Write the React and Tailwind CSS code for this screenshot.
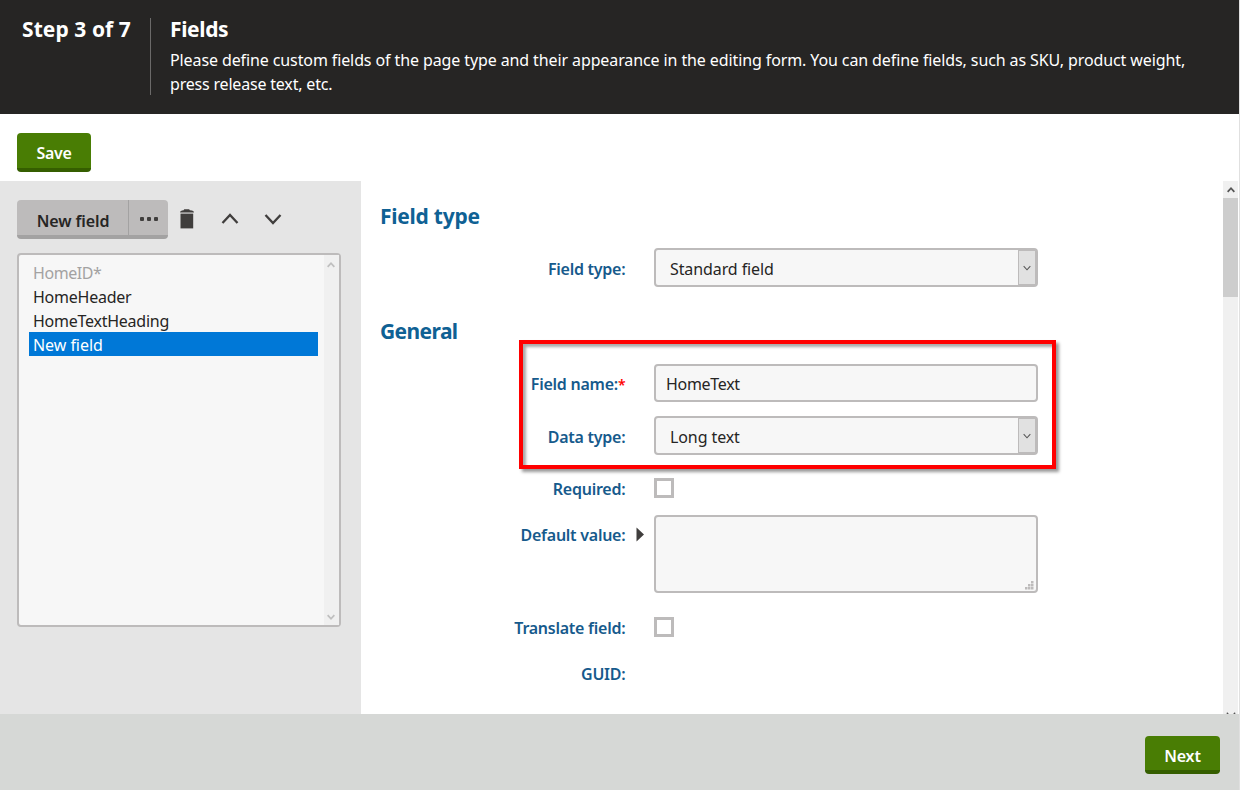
function ChevronUp({ className, strokeWidth = 2.3 }) {
  return (
    <svg className={className} viewBox="0 0 18 18" fill="none" stroke="currentColor" strokeWidth={strokeWidth}>
      <path d="M1.5 13 9 5l7.5 8" />
    </svg>
  );
}

function ChevronDown({ className, strokeWidth = 2.3 }) {
  return (
    <svg className={className} viewBox="0 0 18 18" fill="none" stroke="currentColor" strokeWidth={strokeWidth}>
      <path d="M1.5 5 9 13l7.5-8" />
    </svg>
  );
}

function TrashIcon() {
  return (
    <svg className="h-5 w-4" viewBox="0 0 16 20" fill="#403e3d">
      <path d="M1 3.6Q1 2 3 1.6L4.6 1.3 5.2 0.2H10.2L10.8 1.3 13 1.6Q15 2 15 3.6Z" />
      <path d="M1.5 4.6H14.2V19.4H1.5Z" />
    </svg>
  );
}

function GreenButton({ children, className }) {
  return (
    <button
      className={`flex justify-center rounded-[4px] border-b-4 border-[#355e00] bg-[#497d04] font-semibold text-white ${className}`}
    >
      {children}
    </button>
  );
}

function Row({ label, required, className, children, labelClass = "pt-2" }) {
  return (
    <div className={`flex items-start ${className}`}>
      <div className={`w-[246px] shrink-0 pr-[0.6px] text-right leading-6 font-semibold tracking-[-0.25px] whitespace-nowrap text-[#165a8c] ${labelClass}`}>
        {label}
        {required && <span className="text-sm text-[#f00]">*</span>}
      </div>
      {children}
    </div>
  );
}

function Select({ value }) {
  return (
    <div className="ml-7 flex h-[39px] w-[384px] items-center rounded-[4px] border-2 border-[#bdbbbb] bg-[#f7f7f7] pl-[14px] text-[#262524]">
      <span className="grow pt-0.5 leading-6 tracking-[-0.1px]">{value}</span>
      <span className="flex h-[35px] w-[18px] items-center justify-center border border-[#bdbbbb] bg-[#e1e1e1] text-[#555]">
        <ChevronDown className="h-2 w-2" />
      </span>
    </div>
  );
}

function Checkbox() {
  return <span className="ml-7 size-5 border-[3px] border-[#bdbbbb] bg-white" />;
}

const fields = ["HomeHeader", "HomeTextHeading"];
const gripDots = [[6, 0], [3, 3], [6, 3], [0, 6], [3, 6], [6, 6]];

export default function App() {
  return (
    <div className="flex h-[790px] w-[1240px] flex-col overflow-hidden border-r border-[#e0e0e0] bg-white font-['Noto_Sans','Open_Sans',sans-serif] text-base text-[#262524]">
      <header className="flex h-[114px] shrink-0 bg-[#262524] pt-[18px] text-white">
        <h1 className="h-[77px] w-[151px] border-r border-[#6b6a69] pl-[22px] text-[21px] leading-[22px] font-bold tracking-[0.07px] whitespace-nowrap">
          Step 3 of 7
        </h1>
        <div className="pl-[19px]">
          <h2 className="text-[21px] leading-[22px] font-bold tracking-[-0.35px]">Fields</h2>
          <p className="mt-2 leading-6 tracking-[-0.107px] whitespace-nowrap">
            Please define custom fields of the page type and their appearance in the editing form. You can define fields, such as SKU, product weight,
            <br />
            <span className="tracking-[-0.19px]">press release text, etc.</span>
          </p>
        </div>
      </header>

      <div className="h-[67px] shrink-0 pt-[19px] pl-[17px]">
        <GreenButton className="h-[39px] w-[74px] pt-2 leading-6 tracking-[-0.3px]">Save</GreenButton>
      </div>

      <div className="flex h-[533px] shrink-0">
        <aside className="w-[361px] shrink-0 bg-[#e5e5e5] pt-[19px] pl-[17px]">
          <div className="flex h-[39px] items-start text-[#403e3d]">
            <div className="flex h-[39px] w-[151px] overflow-hidden rounded-[4px] border-b-4 border-[#a3a2a2] bg-[#bdbbbb]">
              <button className="w-28 border-r border-[#a3a2a2] pt-[7px] pl-px leading-6 font-semibold tracking-[-0.1px] text-[#262524]">
                New field
              </button>
              <button className="flex grow items-center justify-center gap-[3px] pt-[3px]">
                <span className="size-1 rounded-[1px] bg-current" />
                <span className="size-1 rounded-[1px] bg-current" />
                <span className="size-1 rounded-[1px] bg-current" />
              </button>
            </div>
            <span className="mt-[9px] ml-[11px]"><TrashIcon /></span>
            <ChevronUp className="mt-2.5 ml-[26px] size-[18px]" />
            <ChevronDown className="mt-2.5 ml-[25px] size-[18px]" />
          </div>
          <div className="mt-3.5 flex h-[374px] w-[324px] rounded-[4px] border-2 border-[#bdbbbb] bg-[#f7f7f7]">
            <ul className="grow pt-[5px] pr-[6px] pl-2.5 leading-6 tracking-[-0.25px]">
              <li className="h-6 pt-px pl-1 tracking-[-0.45px] text-[#a3a2a2]">HomeID*</li>
              {fields.map((name) => (
                <li key={name} className="h-6 pt-px pl-1">{name}</li>
              ))}
              <li className="h-6 bg-[#0078d7] pt-px pl-1 tracking-[-0.05px] text-white">New field</li>
            </ul>
            <div className="flex w-[15px] flex-col items-center justify-between bg-[#f0f0f0] pt-1.5 pr-px pb-1 text-[#bfbfbf]">
              <ChevronUp className="h-2 w-2" strokeWidth={4} />
              <ChevronDown className="h-2 w-2" strokeWidth={4} />
            </div>
          </div>
        </aside>

        <main className="grow pt-[23px] pl-[19px]">
          <h3 className="h-6 text-[21px] leading-6 font-bold tracking-[-0.25px] text-[#0f6194]">Field type</h3>
          <Row label="Field type:" labelClass="pt-[9px]" className="mt-5 h-[39px]">
            <Select value="Standard field" />
          </Row>
          <h3 className="mt-8 h-6 text-[21px] leading-6 font-bold tracking-[-0.6px] text-[#0f6194]">General</h3>
          <div className="relative mt-[21px]">
            <Row label="Field name:" required className="h-[38px]">
              <div className="ml-7 flex h-[38px] w-[384px] items-center rounded-[4px] border-2 border-[#bdbbbb] bg-[#f7f7f7] pt-0.5 pl-[10px] tracking-[-0.3px]">
                HomeText
              </div>
            </Row>
            <Row label="Data type:" labelClass="pt-[9px]" className="mt-[14px] h-[39px]">
              <Select value="Long text" />
            </Row>
            <div className="pointer-events-none absolute -top-6 left-[139px] h-[129px] w-[537px] border-4 border-[#f00] shadow-[3px_3px_3px_#999,inset_3px_3px_3px_#aaa]" />
          </div>
          <Row label="Required:" className="mt-3.5 h-[39px]">
            <span className="mt-[9px] flex"><Checkbox /></span>
          </Row>
          <Row label="Default value:" className="mt-[7px] h-[78px]">
            <svg className="mt-3 ml-2.5 h-[15px] w-2" viewBox="0 0 8 15"><path d="M0.5 0.5 8 7.5 0.5 14.5Z" fill="#403e3d" /></svg>
            <div className="ml-2.5 flex h-[78px] w-[384px] items-end justify-end rounded-[4px] border-2 border-[#bdbbbb] bg-[#f7f7f7] pr-0.5 pb-px">
              <svg className="h-[9px] w-[9px]" viewBox="0 0 9 9" fill="#bdbbbb">
                {gripDots.map(([x, y]) => (
                  <rect key={`${x}-${y}`} x={x} y={y} width="2.5" height="2.5" />
                ))}
              </svg>
            </div>
          </Row>
          <Row label="Translate field:" className="mt-[15px] h-[39px]">
            <span className="mt-[9px] flex"><Checkbox /></span>
          </Row>
          <Row label="GUID:" className="mt-[7px]" />
        </main>

        <div className="mr-px flex w-[15px] shrink-0 flex-col items-center overflow-hidden bg-[#f0f0f0] text-[#555]">
          <ChevronUp className="mt-[5px] mb-1 h-2 w-2 shrink-0" strokeWidth={4} />
          <div className="h-[99px] w-full shrink-0 bg-[#cdcdcd]" />
          <ChevronDown className="mt-[413px] h-2.5 w-2.5 shrink-0" />
        </div>
      </div>

      <footer className="flex h-[76px] shrink-0 justify-end bg-[#d6d8d6] pt-[22px] pr-[19px]">
        <GreenButton className="h-[38px] w-[75px] pt-2 leading-6 tracking-[-0.2px]">Next</GreenButton>
      </footer>
    </div>
  );
}
